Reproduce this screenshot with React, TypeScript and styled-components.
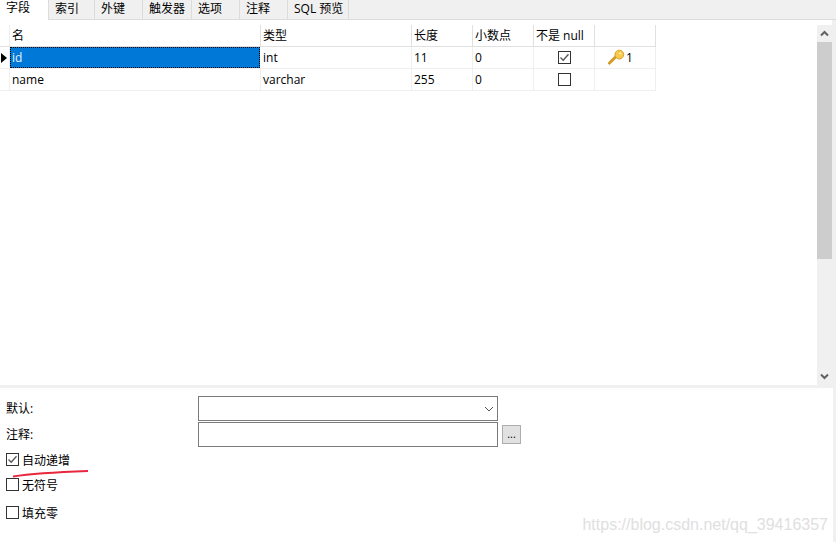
import styled, { createGlobalStyle } from 'styled-components';

const GlobalStyle = createGlobalStyle`
  html, body { margin: 0; padding: 0; background: #fff; }
  body {
    width: 837px;
    height: 542px;
    overflow: hidden;
    font-family: "Open Sans", "Noto Sans CJK SC", sans-serif;
    font-size: 12px;
    color: #000;
  }
`

const Window = styled.div`
  position: relative;
  width: 836px;
  height: 542px;
  display: flex;
  flex-direction: column;
  background: #f0f0f0;
`
const TabBar = styled.div`
  height: 19px;
  display: flex;
  flex: none;
  border-bottom: 1px solid #dcdcdc;
`
const Tab = styled.div<{ $width: number; $active?: boolean }>`
  width: ${(p) => p.$width}px;
  box-sizing: border-box;
  height: ${(p) => (p.$active ? 20 : 19)}px;
  padding-left: 6px;
  line-height: ${(p) => (p.$active ? 16 : 18)}px;
  background: ${(p) => (p.$active ? '#fff' : '#f0f0f0')};
  border-right: 1px solid #dcdcdc;
  white-space: nowrap;
`
const Body = styled.div`
  flex: none;
  width: 832px;
  height: 365px;
  display: flex;
  background: #fff;
  padding-top: 5px;
  box-sizing: border-box;
`
const GridArea = styled.div`
  flex: 1;
`
const Row = styled.div<{ $head?: boolean }>`
  display: grid;
  grid-template-columns: 10px 251px 151px 61px 61px 61px 61px;
  grid-template-rows: 21px;
  width: 656px;
  height: 22px;
  box-sizing: border-box;
  border-bottom: 1px solid ${(p) => (p.$head ? '#e0e0e0' : '#efefef')};
`
const Cell = styled.div<{ $center?: boolean; $selected?: boolean }>`
  box-sizing: border-box;
  border-right: 1px solid #efefef;
  padding-left: ${(p) => (p.$center || p.$selected ? 0 : 2)}px;
  line-height: 21px;
  display: flex;
  align-items: center;
  white-space: nowrap;
  justify-content: ${(p) => (p.$center ? 'center' : 'flex-start')};
  ${(p) =>
    p.$selected &&
    `
    background: #0078d7;
    color: #e8f2fb;
    border: 1px dotted #000;
    margin-right: 1px;
    line-height: 19px;
    padding-left: 1px;
  `}
`
const HeadCell = styled(Cell)`
  border-right-color: #e0e0e0;
`
const Marker = styled.div`
  border-right: 1px solid #efefef;
  display: flex;
  align-items: center;
  padding-left: 1px;
`
const Arrow = styled.div`
  width: 0;
  height: 0;
  border-top: 5px solid transparent;
  border-bottom: 5px solid transparent;
  border-left: 6px solid #000;
`
const KeyCell = styled(Cell)`
  padding-left: 13px;
  gap: 1px;
`
const Scrollbar = styled.div`
  width: 15px;
  flex: none;
  margin-top: -5px;
  padding-top: 5px;
  display: flex;
  flex-direction: column;
  background: #fff;
`
const Track = styled.div`
  flex: 1;
  background: #f0f0f0;
  display: flex;
  flex-direction: column;
  align-items: center;
`
const ScrollButton = styled.div`
  height: 17px;
  width: 100%;
  flex: none;
  display: flex;
  align-items: center;
  justify-content: center;
`
const Thumb = styled.div`
  height: 217px;
  width: 100%;
  flex: none;
  background: #cdcdcd;
`
const Spacer = styled.div`
  flex: 1;
`
const Divider = styled.div`
  height: 3px;
  flex: none;
`
const Panel = styled.div`
  flex: 1;
  width: 833px;
  background: #fff;
  box-sizing: border-box;
  padding: 8px 0 0 6px;
`
const FormRow = styled.div`
  display: flex;
  align-items: center;
  height: 25px;
  margin-bottom: 1px;
`
const Label = styled.div`
  width: 192px;
  flex: none;
  margin-top: -2px;
`
const Field = styled.div`
  width: 300px;
  height: 25px;
  box-sizing: border-box;
  border: 1px solid #7a7a7a;
  display: flex;
  align-items: center;
  justify-content: flex-end;
  padding-right: 3px;
  background: #fff;
`
const MoreButton = styled.div`
  width: 19px;
  height: 19px;
  margin-left: 4px;
  box-sizing: border-box;
  border: 1px solid #adadad;
  background: #e1e1e1;
  text-align: center;
  line-height: 16px;
  font-size: 11px;
`
const CheckRow = styled.div<{ $gap: number }>`
  display: flex;
  align-items: flex-start;
  gap: 3px;
  height: 14px;
  margin-top: ${(p) => p.$gap}px;
  line-height: 12px;
`
const CheckText = styled.span`
  position: relative;
  top: 2px;
`
const Box = styled.div`
  width: 13px;
  height: 13px;
  box-sizing: border-box;
  border: 1px solid #333;
  background: #fff;
  display: flex;
  align-items: center;
  justify-content: center;
  flex: none;
`
const Underline = styled.svg`
  position: absolute;
  left: 10px;
  top: 468px;
`
const Watermark = styled.div`
  position: absolute;
  right: 8px;
  bottom: 8px;
  font-family: "Liberation Sans", sans-serif;
  font-size: 16px;
  color: #e0e0e0;
`

const Check = () => (
  <svg width="11" height="11" viewBox="0 0 11 11">
    <path d="M1.5 5.5 L4.2 8.2 L9.5 2.2" fill="none" stroke="#555" strokeWidth="1.3" />
  </svg>
)

const Key = () => (
  <svg width="17" height="17" viewBox="0 0 17 17">
    <path d="M1.5 14 L8 7.5" stroke="#d49a26" strokeWidth="3" strokeLinecap="square" />
    <circle cx="11.3" cy="5.6" r="4.4" fill="#f7c94f" stroke="#d9a22c" strokeWidth="1" />
    <circle cx="12.3" cy="4.4" r="1" fill="#fff3c9" />
  </svg>
)

const Chevron = ({ down }: { down?: boolean }) => (
  <svg width="9" height="7" viewBox="0 0 9 7">
    <path
      d={down ? 'M1 1.5 L4.5 5 L8 1.5' : 'M1 5.5 L4.5 2 L8 5.5'}
      fill="none"
      stroke="#606060"
      strokeWidth="2"
    />
  </svg>
)

const tabs = [
  { name: '字段', width: 49, active: true },
  { name: '索引', width: 46 },
  { name: '外键', width: 48 },
  { name: '触发器', width: 49 },
  { name: '选项', width: 48 },
  { name: '注释', width: 48 },
  { name: 'SQL 预览', width: 61 },
];

const heads = ['名', '类型', '长度', '小数点', '不是 null', ''];

const App = () => {
  return (
    <Window>
      <GlobalStyle />
      <TabBar>
        {tabs.map((t) => (
          <Tab key={t.name} $width={t.width} $active={t.active}>{t.name}</Tab>
        ))}
      </TabBar>
      <Body>
        <GridArea>
          <Row $head>
            <Marker />
            {heads.map((h, i) => <HeadCell key={i}>{h}</HeadCell>)}
          </Row>
          <Row>
            <Marker><Arrow /></Marker>
            <Cell $selected>id</Cell>
            <Cell>int</Cell>
            <Cell>11</Cell>
            <Cell>0</Cell>
            <Cell $center><Box><Check /></Box></Cell>
            <KeyCell><Key />1</KeyCell>
          </Row>
          <Row>
            <Marker />
            <Cell>name</Cell>
            <Cell>varchar</Cell>
            <Cell>255</Cell>
            <Cell>0</Cell>
            <Cell $center><Box /></Cell>
            <Cell />
          </Row>
        </GridArea>
        <Scrollbar>
          <Track>
            <ScrollButton><Chevron /></ScrollButton>
            <Thumb />
            <Spacer />
            <ScrollButton><Chevron down /></ScrollButton>
          </Track>
        </Scrollbar>
      </Body>
      <Divider />
      <Panel>
        <FormRow>
          <Label>默认:</Label>
          <Field>
            <svg width="10" height="6" viewBox="0 0 10 6">
              <path d="M1 1 L5 5 L9 1" fill="none" stroke="#555" strokeWidth="1" />
            </svg>
          </Field>
        </FormRow>
        <FormRow>
          <Label>注释:</Label>
          <Field />
          <MoreButton>...</MoreButton>
        </FormRow>
        <CheckRow $gap={6}><Box><Check /></Box><CheckText>自动递增</CheckText></CheckRow>
        <CheckRow $gap={11}><Box /><CheckText>无符号</CheckText></CheckRow>
        <CheckRow $gap={14}><Box /><CheckText>填充零</CheckText></CheckRow>
      </Panel>
      <Underline width="80" height="10" viewBox="0 0 80 10">
        <path d="M3 8.5 C 25 5, 50 4, 78 3" fill="none" stroke="#e8273c" strokeWidth="2" />
      </Underline>
      <Watermark>https://blog.csdn.net/qq_39416357</Watermark>
    </Window>
  );
};

export default App;
